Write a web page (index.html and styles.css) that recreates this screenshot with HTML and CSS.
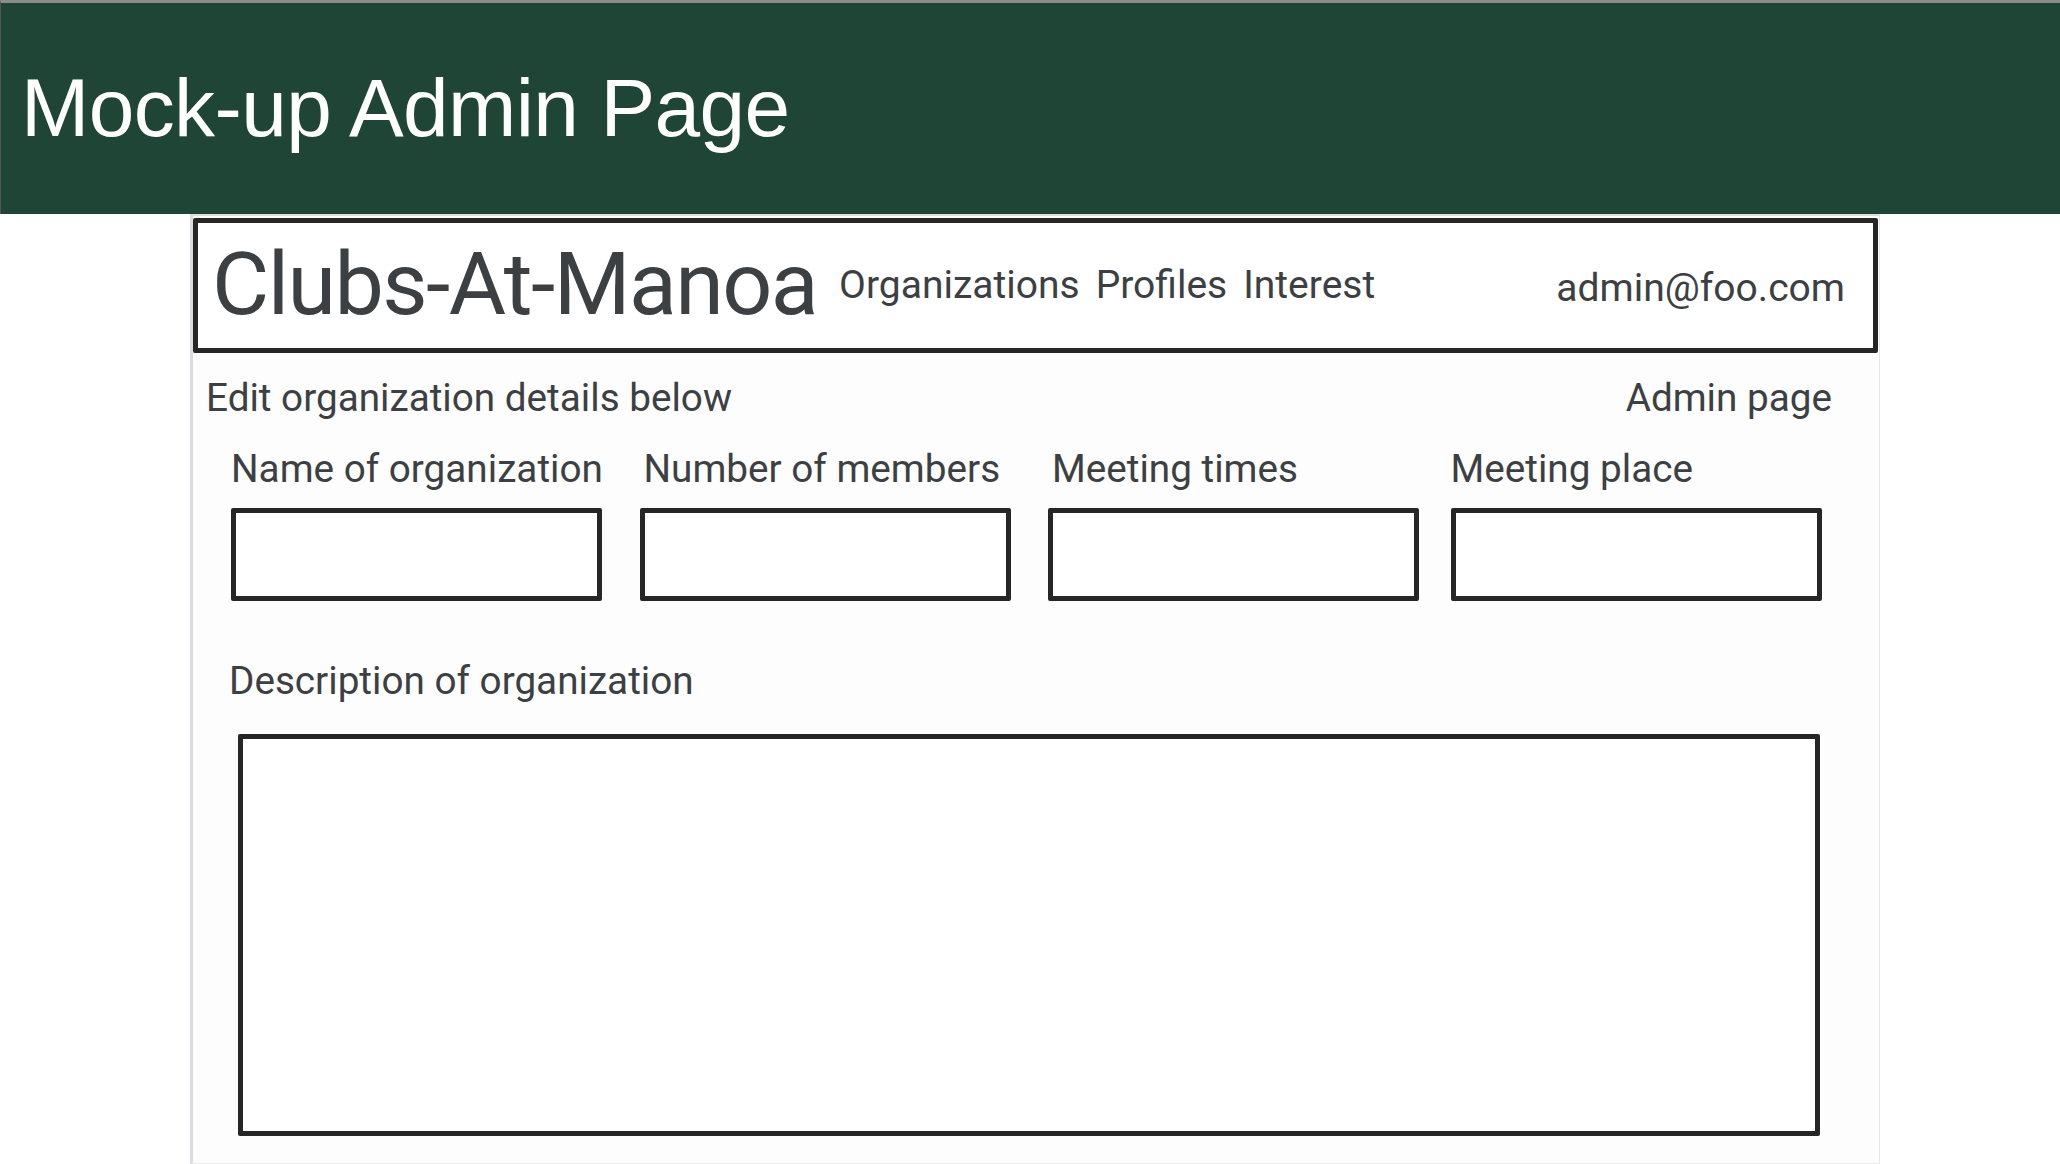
FILE: index.html
```html
<!DOCTYPE html>
<html lang="en">
<head>
<meta charset="utf-8">
<title>Mock-up Admin Page</title>
<link rel="stylesheet" href="styles.css">
</head>
<body>
<header class="slide-header">
  <h1 class="slide-title">Mock-up Admin Page</h1>
</header>
<main class="panel">
  <nav class="navbar">
    <div class="brand">Clubs-At-Manoa</div>
    <ul class="nav-links">
      <li>Organizations</li>
      <li>Profiles</li>
      <li>Interest</li>
    </ul>
    <div class="nav-user">admin@foo.com</div>
  </nav>
  <div class="subbar">
    <span>Edit organization details below</span>
    <span>Admin page</span>
  </div>
  <div class="fields">
    <div class="field field-1">
      <label class="field-label">Name of organization</label>
      <div class="input-box"></div>
    </div>
    <div class="field field-2">
      <label class="field-label">Number of members</label>
      <div class="input-box"></div>
    </div>
    <div class="field field-3">
      <label class="field-label">Meeting times</label>
      <div class="input-box"></div>
    </div>
    <div class="field field-4">
      <label class="field-label">Meeting place</label>
      <div class="input-box"></div>
    </div>
  </div>
  <div class="desc">
    <label class="field-label desc-label">Description of organization</label>
    <div class="textarea-box"></div>
  </div>
</main>
</body>
</html>
```

FILE: styles.css
```css
* {
  box-sizing: border-box;
}

html, body {
  margin: 0;
  padding: 0;
  background: #ffffff;
}

body {
  width: 2060px;
  height: 1164px;
  overflow: hidden;
  font-family: Roboto, "Liberation Sans", sans-serif;
  color: #3c4043;
}

.slide-header {
  height: 214px;
  background: #1e4535;
  border-top: 3px solid #8c8c8c;
  border-left: 1px solid #555;
  padding-left: 20px;
  padding-top: 56px;
}

.slide-title {
  margin: 0;
  font-family: "Liberation Sans", Arial, sans-serif;
  font-weight: 400;
  font-size: 82px;
  letter-spacing: -0.6px;
  line-height: 1.2;
  color: #ffffff;
}

.panel {
  margin-left: 190px;
  width: 1690px;
  height: 950px;
  background: #fdfdfd;
  border-left: 3px solid #dcdde3;
  border-right: 1px solid #e8e8e8;
  border-top: 2px solid #dedede;
  border-bottom: 1px solid #ececec;
  padding-top: 2px;
}

.navbar {
  display: flex;
  align-items: center;
  height: 135px;
  margin-right: 1px;
  border: 5px solid #262626;
  border-radius: 2px;
  background: #ffffff;
  padding: 0 28px 0 14px;
}

.brand {
  font-size: 88px;
  line-height: 1;
  letter-spacing: -1.6px;
  margin-top: -4px;
}

.nav-links {
  display: flex;
  gap: 16px;
  list-style: none;
  margin: 0 0 0 22px;
  padding: 0;
  font-size: 39px;
  line-height: 1;
}

.nav-user {
  margin-left: auto;
  font-size: 39px;
  line-height: 1;
  margin-top: 6px;
}

.subbar {
  display: flex;
  justify-content: space-between;
  margin-top: 22px;
  padding: 0 47px 0 13px;
  font-size: 38.7px;
  line-height: 45px;
}

.fields {
  display: grid;
  grid-template-columns: repeat(4, 371px);
  column-gap: 37.5px;
  margin-top: 26px;
  padding-left: 38px;
}

.field {
  display: flex;
  flex-direction: column;
}

.field-4 {
  margin-left: -6px;
  margin-right: 6px;
}

.field-label {
  font-size: 38.7px;
  line-height: 45px;
  padding-left: 0;
  white-space: nowrap;
}

.field-2 .field-label,
.field-3 .field-label {
  padding-left: 4px;
}

.input-box {
  margin-top: 17px;
  height: 93px;
  border: 5px solid #262626;
  border-radius: 2px;
  background: #ffffff;
}

.desc {
  display: flex;
  flex-direction: column;
  margin-top: 57px;
  padding-left: 36px;
  padding-right: 59px;
}

.textarea-box {
  margin-top: 31px;
  margin-left: 9px;
  height: 402px;
  border: 5px solid #262626;
  border-radius: 2px;
  background: #ffffff;
}
```
